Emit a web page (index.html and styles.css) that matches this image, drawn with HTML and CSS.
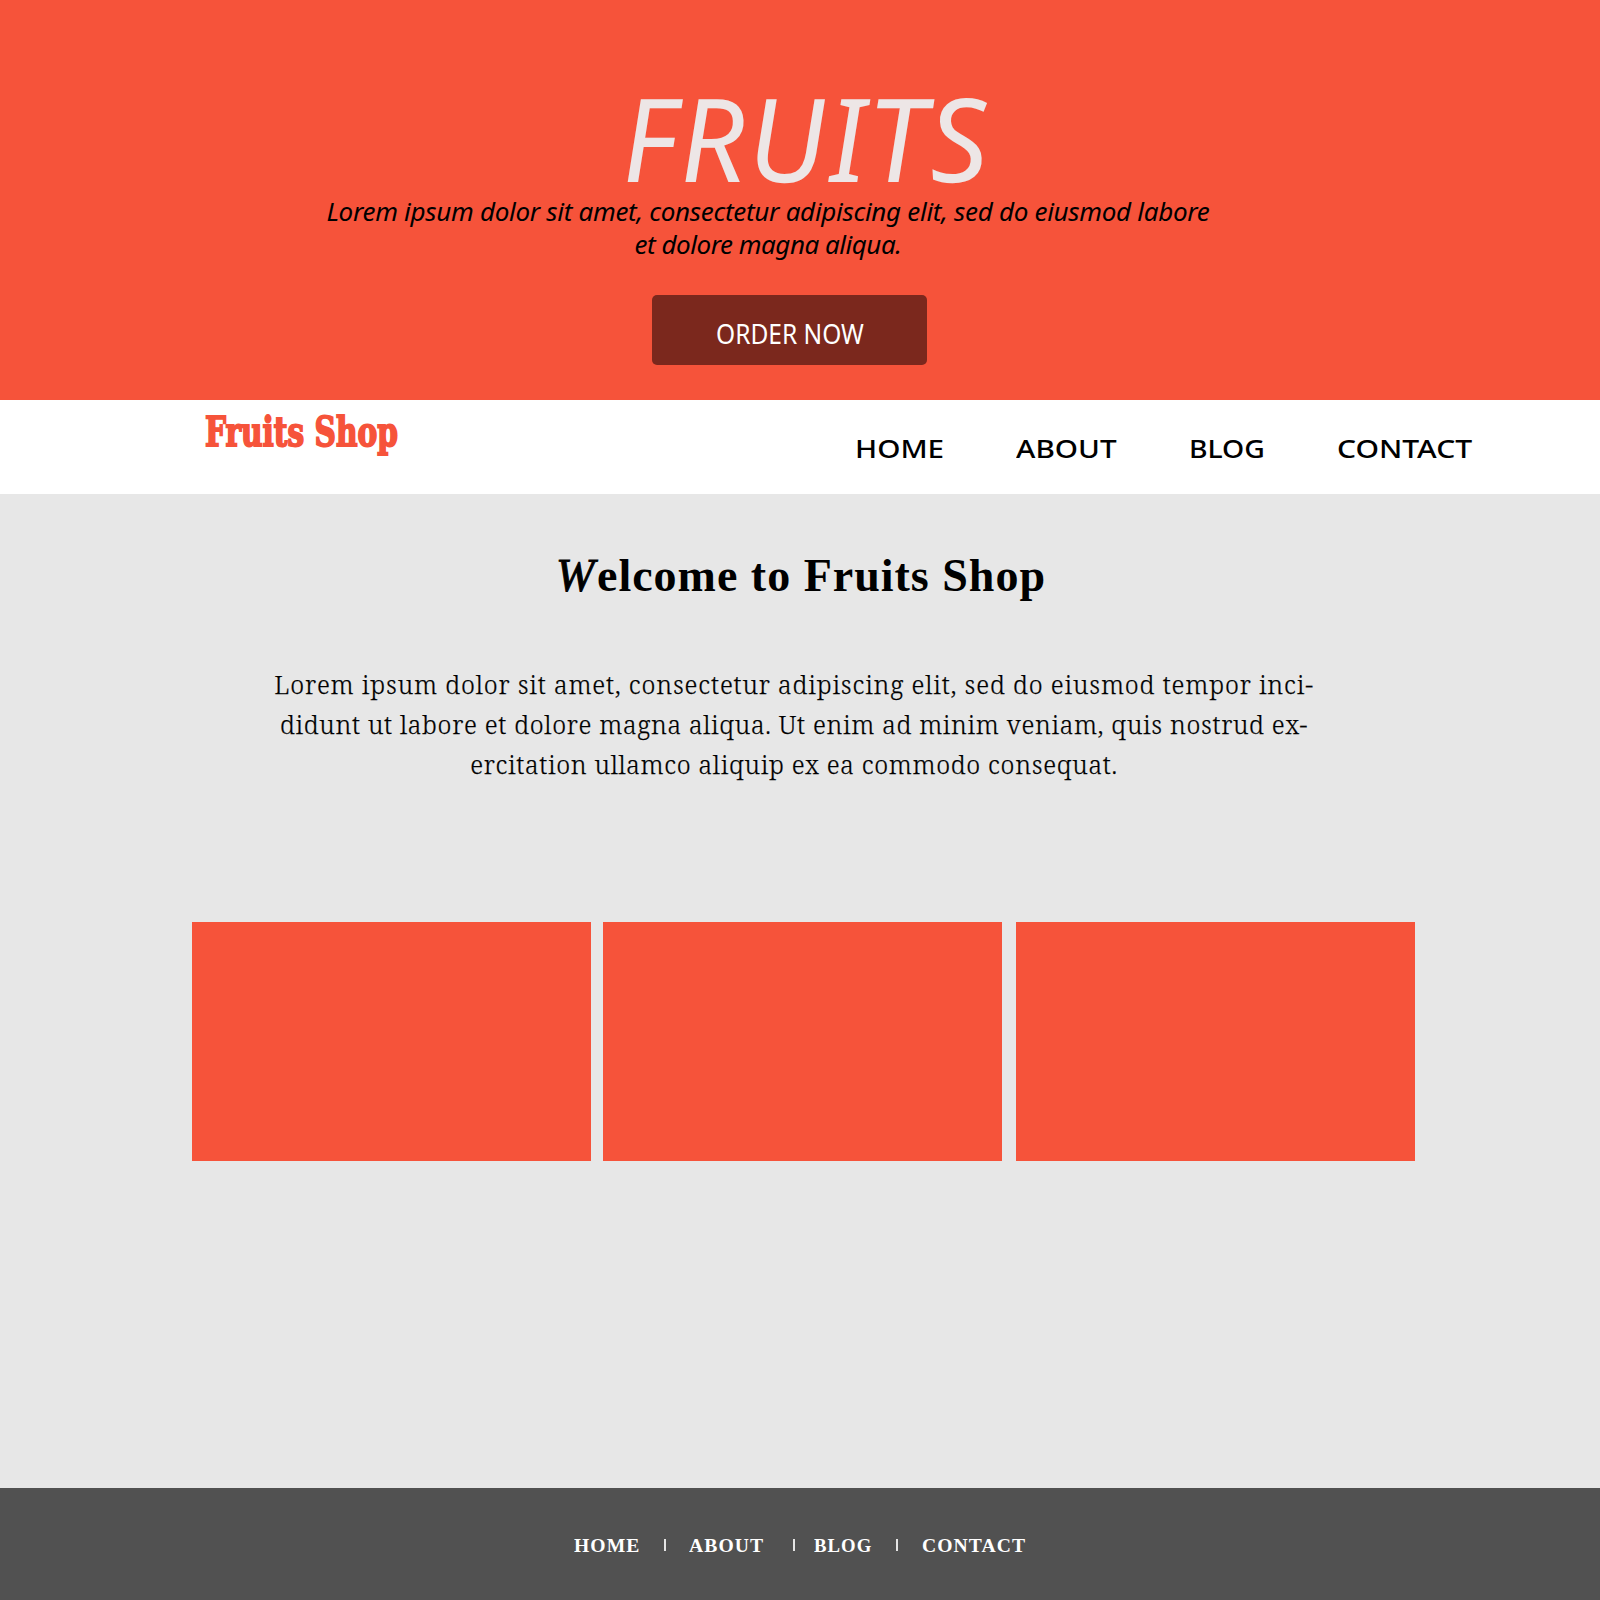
FILE: index.html
```html
<!DOCTYPE html>
<html lang="en">
<head>
<meta charset="utf-8">
<title>Fruits Shop</title>
<link rel="stylesheet" href="styles.css">
</head>
<body>
<section class="hero">
  <h1 class="hero-title">FRUITS</h1>
  <p class="hero-text">Lorem ipsum dolor sit amet, consectetur adipiscing elit, sed do eiusmod labore<br><span class="hero-last">et dolore magna aliqua.</span></p>
  <a class="order"><span>ORDER NOW</span></a>
</section>
<header class="bar">
  <div class="logo">Fruits Shop</div>
  <nav class="menu">
    <a class="m-home">HOME</a>
    <a class="m-about">ABOUT</a>
    <a class="m-blog">BLOG</a>
    <a class="m-contact">CONTACT</a>
  </nav>
</header>
<main class="main">
  <h2 class="welcome"><span class="initial">W</span><span>elcome to Fruits Shop</span></h2>
  <p class="intro">Lorem ipsum dolor sit amet, consectetur adipiscing elit, sed do eiusmod tempor inci-<br><span class="tight">didunt ut labore et dolore magna aliqua. Ut enim ad minim veniam, quis nostrud ex-<br>ercitation ullamco aliquip ex ea commodo consequat.</span></p>
  <div class="cards">
    <div class="card"></div>
    <div class="card"></div>
    <div class="card"></div>
  </div>
</main>
<footer class="footer">
  <a class="f-home">HOME</a><i></i>
  <a class="f-about">ABOUT</a><i></i>
  <a class="f-blog">BLOG</a><i></i>
  <a class="f-contact">CONTACT</a>
</footer>
</body>
</html>
```
FILE: styles.css
```css
* { box-sizing: border-box; margin: 0; padding: 0; }
body { width: 1600px; height: 1600px; background: #e7e7e7; color: #000; font-family: "Noto Sans", sans-serif; display: flex; flex-direction: column; }

.hero { height: 400px; background: #f6533a; padding-top: 79px; }
.hero-title { margin-left: 623px; font-size: 116px; line-height: 116px; font-weight: 400; font-style: italic; letter-spacing: 2.4px; color: #ede6e6; transform: skewX(3deg); transform-origin: 0 103px; }
.hero-text { width: 1536px; text-align: center; font-size: 26px; line-height: 33px; font-style: italic; letter-spacing: -0.29px; }
.hero-last { letter-spacing: -0.48px; }
.order { display: block; margin: 34px 0 0 652px; width: 275px; height: 70px; padding-top: 9px; border-radius: 5px; background: #7b281d; color: #fff; text-align: center; font-size: 26.5px; line-height: 61px; }
.order span { display: inline-block; transform: scaleX(.925); }

.bar { height: 94px; background: #fff; display: flex; }
.logo { margin-left: 205px; width: 652px; font: bold 41px/64px "DejaVu Serif Condensed", "DejaVu Serif", serif; color: #f6533a; -webkit-text-stroke: 1.8px #f6533a; transform: scaleX(.803); transform-origin: left; height: 64px; white-space: nowrap; }
.menu { display: flex; font-size: 26px; font-weight: 500; line-height: 96px; }
.menu a { transform: scaleX(1.14); transform-origin: left; white-space: nowrap; margin-left: -2px; }
.m-home { width: 163px; }
.m-about { width: 175px; }
.menu .m-blog { width: 150px; transform: scaleX(1.09); }
.menu .m-contact { transform: scaleX(1.155); }

.main { height: 994px; padding-top: 52px; }
.welcome { display: flex; margin-left: 556px; font: bold 46px/60px "Liberation Serif", serif; letter-spacing: 1px; }
.initial { width: 41px; font-weight: 400; font-style: italic; -webkit-text-stroke: 1px #000; }
.intro { width: 1588px; margin-top: 58px; text-align: center; font: 300 25px/40px "Noto Serif", "Liberation Serif", serif; letter-spacing: .87px; -webkit-text-stroke: .25px #000; }
.tight { letter-spacing: .7px; }
.cards { margin: 138px 0 0 192px; display: grid; grid-template-columns: 411px 413px 399px; }
.card { width: 399px; height: 239px; background: #f6533a; }

.footer { height: 112px; background: #515151; color: #fff; display: flex; padding: 2px 0 0 574px; font: bold 18px/112px "Liberation Serif", serif; letter-spacing: 1px; }
.footer a { transform: scaleX(1.09); transform-origin: left; white-space: nowrap; }
.footer i { width: 2px; height: 12px; margin-top: 49px; background: #e4e4e4; }
.f-home { width: 90px; }
.f-about { width: 104px; margin-left: 23px; }
.footer .f-blog { width: 82px; margin-left: 19px; transform: scaleX(1.04); }
.f-contact { margin-left: 24px; }
```
